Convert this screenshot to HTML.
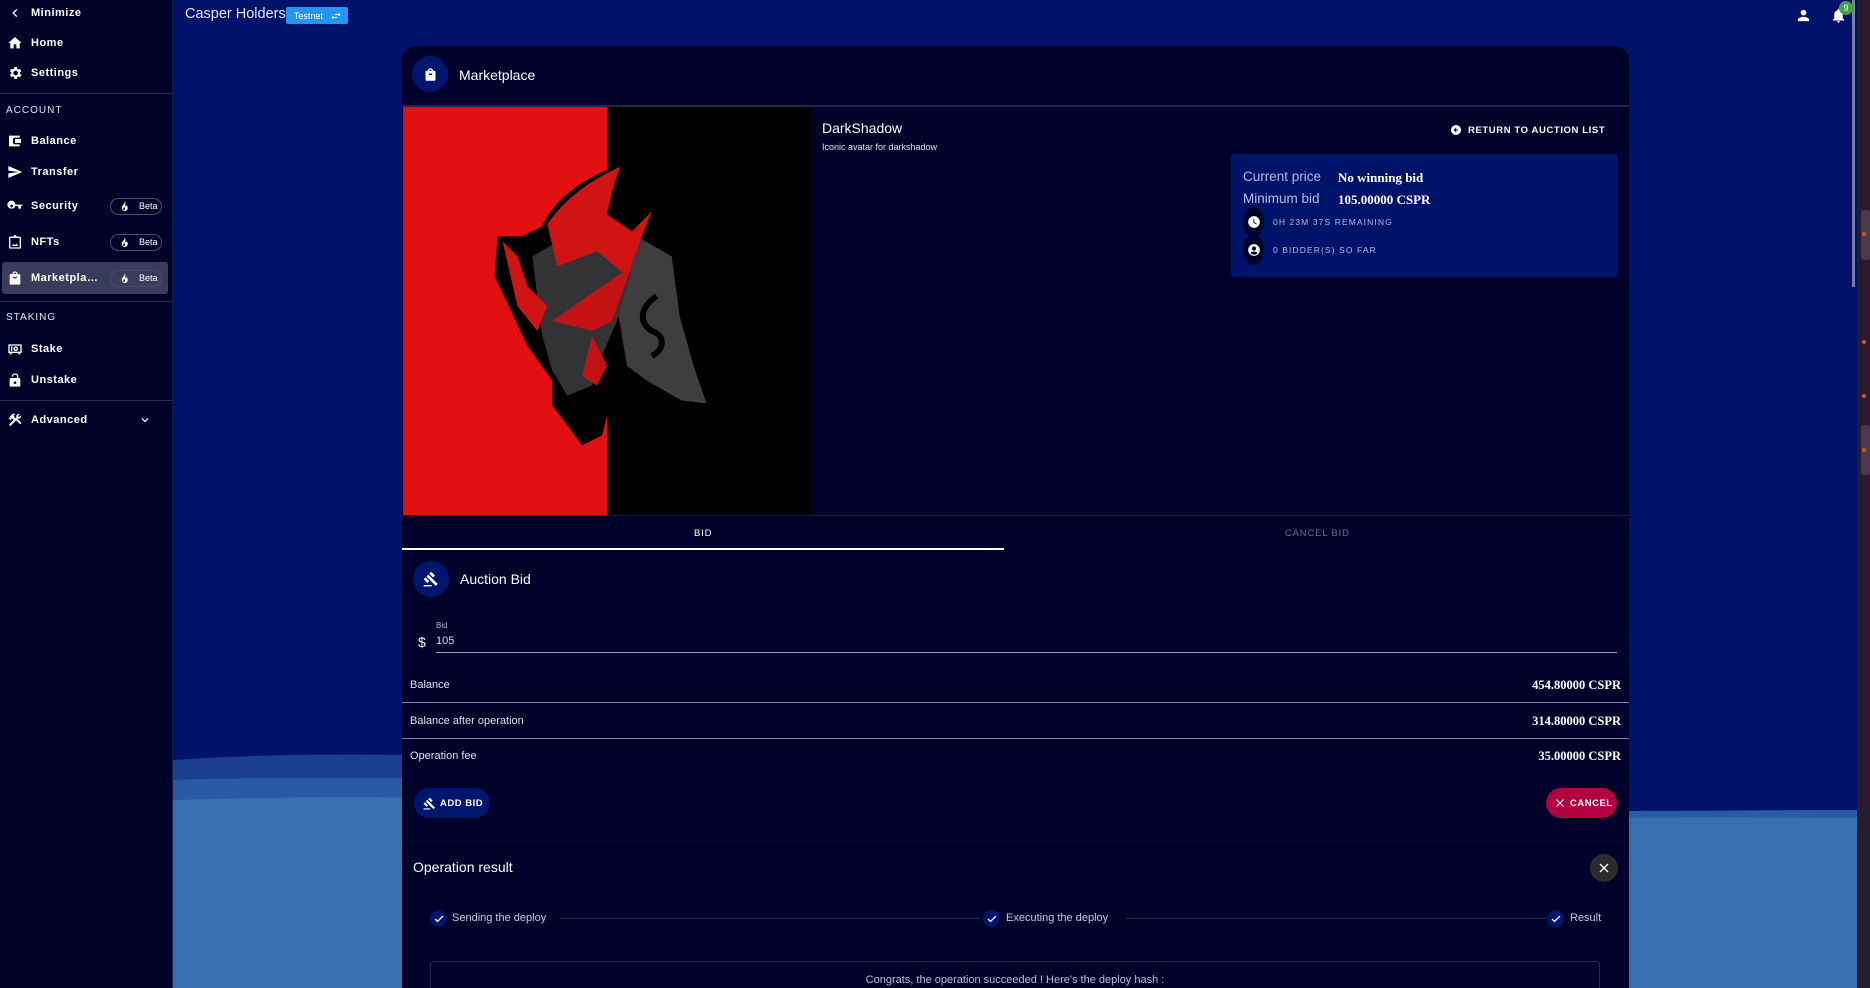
<!DOCTYPE html>
<html><head><meta charset="utf-8">
<style>
*{box-sizing:border-box;margin:0;padding:0}
html,body{width:1870px;height:988px;overflow:hidden}
body{background:#00126a;font-family:"Liberation Sans",sans-serif;color:#fff;position:relative}
.abs{position:absolute}
#side{left:0;top:0;width:173px;height:988px;background:#000328;border-right:1px solid #1a1c44}
.it{position:absolute;left:0;width:173px;height:26px;display:flex;align-items:center;font-size:11px;font-weight:bold;letter-spacing:.5px}
.it svg{position:absolute;left:7px;width:16px;height:16px;fill:#fff}
.it span{position:absolute;left:31px}
.sec{position:absolute;left:6px;font-size:10px;letter-spacing:1px;color:#e6e6ee}
.hr{position:absolute;left:0;width:173px;height:1px;background:#262a4e}
.beta{position:absolute;left:110px;width:52px;height:17px;border:1px solid #4a4c6e;border-radius:9px;font-size:9px;font-weight:normal;letter-spacing:0;display:flex;align-items:center}
.beta svg{position:static;width:12px;height:12px;margin-left:7px;margin-right:9px}
#card{left:402px;top:46px;width:1227px;height:942px;background:#000229;border-radius:14px 14px 0 0;overflow:hidden}
.circ{position:absolute;border-radius:50%;background:#00166e;display:flex;align-items:center;justify-content:center}
.row{position:absolute;left:8px;width:1211px;font-size:11px;color:#e0e0ea}
.row b{position:absolute;right:0;top:-1px;font-family:"Liberation Serif",serif;font-size:12.5px;color:#fff}
.line{position:absolute;left:0;width:1227px;height:1px;background:#7d7f9c}
</style></head><body>
<svg class="abs" style="left:173px;top:740px" width="1697" height="248" viewBox="0 0 1697 248">
<path d="M0 20 C300 0 600 40 900 60 C1200 80 1450 95 1697 105 L1697 248 L0 248Z" fill="#1b3f8f"/>
<path d="M0 40 C300 30 600 55 900 70 C1200 75 1450 70 1697 70 L1697 248 L0 248Z" fill="#2a5aa3"/>
<path d="M0 60 C300 50 600 70 900 78 C1200 80 1450 76 1697 78 L1697 248 L0 248Z" fill="#3570b0"/>
</svg>
<div class="abs" style="left:1857px;top:0;width:13px;height:988px;background:#2a1b2b"></div>
<div class="abs" style="left:1852px;top:0;width:3px;height:287px;background:#7a7e9a"></div>
<div class="abs" style="left:1861px;top:210px;width:9px;height:50px;background:#4a3a4a;border-radius:3px"></div>
<div class="abs" style="left:1861px;top:425px;width:9px;height:50px;background:#4a3a4a;border-radius:3px"></div>
<div class="abs" style="left:1862px;top:232px;width:4px;height:4px;background:#e05020;border-radius:50%"></div>
<div class="abs" style="left:1862px;top:340px;width:4px;height:4px;background:#e05020;border-radius:50%"></div>
<div class="abs" style="left:1862px;top:394px;width:4px;height:4px;background:#e05020;border-radius:50%"></div>
<div class="abs" style="left:1862px;top:448px;width:4px;height:4px;background:#e05020;border-radius:50%"></div>

<div id="side" class="abs">
<div class="it" style="top:0"><svg viewBox="0 0 24 24"><path d="M15.4 7.4L14 6l-6 6 6 6 1.4-1.4L10.8 12z"/></svg><span>Minimize</span></div>
<div class="it" style="top:30px"><svg viewBox="0 0 24 24"><path d="M10 20v-6h4v6h5v-8h3L12 3 2 12h3v8z"/></svg><span>Home</span></div>
<div class="it" style="top:60px"><svg viewBox="0 0 24 24"><path d="M19.4 13a7.5 7.5 0 000-2l2.1-1.6-2-3.5-2.5 1a7 7 0 00-1.7-1L15 3h-4l-.4 2.7a7 7 0 00-1.7 1l-2.5-1-2 3.5L6.6 11a7.5 7.5 0 000 2l-2.1 1.6 2 3.5 2.5-1a7 7 0 001.7 1L11 21h4l.4-2.7a7 7 0 001.7-1l2.5 1 2-3.5zM13 15.5a3.5 3.5 0 110-7 3.5 3.5 0 010 7z"/></svg><span>Settings</span></div>
<div class="hr" style="top:93px"></div>
<div class="sec" style="top:105px">ACCOUNT</div>
<div class="it" style="top:128px"><svg viewBox="0 0 24 24"><path d="M3 4h16v3h-7a3 3 0 00-3 3v4a3 3 0 003 3h7v3H3zM12 9h9v6h-9zM15 11h2v2h-2z"/></svg><span>Balance</span></div>
<div class="it" style="top:159px"><svg viewBox="0 0 24 24"><path d="M2 21l21-9L2 3v7l15 2-15 2z"/></svg><span>Transfer</span></div>
<div class="it" style="top:193px"><svg viewBox="0 0 24 24"><path d="M12.6 10A6 6 0 107 16a6 6 0 005.6-4H17v4h4v-4h2v-2zM7 14a2 2 0 110-4 2 2 0 010 4z"/></svg><span>Security</span><div class="beta"><svg viewBox="0 0 24 24"><path d="M13.5 1s1 3-1 6-5 5-5 9a6 6 0 0012 0c0-4-3-6-3-6s0 3-2 3c0-4 1-8-1-12zM12 20a2 2 0 01-2-2c0-2 2-3 2-5 1 2 2 3 2 5a2 2 0 01-2 2z"/></svg>Beta</div></div>
<div class="it" style="top:229px"><svg viewBox="0 0 24 24"><path d="M19 4h-4l-3-3-3 3H5a2 2 0 00-2 2v14a2 2 0 002 2h14a2 2 0 002-2V6a2 2 0 00-2-2zm0 16H5V6h14zM7 18h10l-3-4-2 3-2-2z"/></svg><span>NFTs</span><div class="beta"><svg viewBox="0 0 24 24"><path d="M13.5 1s1 3-1 6-5 5-5 9a6 6 0 0012 0c0-4-3-6-3-6s0 3-2 3c0-4 1-8-1-12zM12 20a2 2 0 01-2-2c0-2 2-3 2-5 1 2 2 3 2 5a2 2 0 01-2 2z"/></svg>Beta</div></div>
<div class="abs" style="left:2px;top:262px;width:166px;height:32px;background:#3a3c5c;border-radius:3px"></div>
<div class="it" style="top:265px"><svg viewBox="0 0 24 24"><path d="M18 6h-2a4 4 0 00-8 0H6a2 2 0 00-2 2v12a2 2 0 002 2h12a2 2 0 002-2V8a2 2 0 00-2-2zm-6-2a2 2 0 012 2h-4a2 2 0 012-2zm0 9a3 3 0 01-3-3h2a1 1 0 002 0h2a3 3 0 01-3 3z"/></svg><span>Marketpla…</span><div class="beta"><svg viewBox="0 0 24 24"><path d="M13.5 1s1 3-1 6-5 5-5 9a6 6 0 0012 0c0-4-3-6-3-6s0 3-2 3c0-4 1-8-1-12zM12 20a2 2 0 01-2-2c0-2 2-3 2-5 1 2 2 3 2 5a2 2 0 01-2 2z"/></svg>Beta</div></div>
<div class="hr" style="top:301px"></div>
<div class="sec" style="top:312px">STAKING</div>
<div class="it" style="top:336px"><svg viewBox="0 0 24 24"><path d="M2 5h20v13h-2v2h-3v-2H7v2H4v-2H2zm2 2v9h16V7zm2 1h2v7H6zm7 0a3.5 3.5 0 110 7 3.5 3.5 0 010-7zm0 2a1.5 1.5 0 100 3 1.5 1.5 0 000-3z"/></svg><span>Stake</span></div>
<div class="it" style="top:367px"><svg viewBox="0 0 24 24"><path d="M18 9h-1V7a5 5 0 00-10 0h2a3 3 0 016 0v2H6a2 2 0 00-2 2v9a2 2 0 002 2h12a2 2 0 002-2v-9a2 2 0 00-2-2zm-6 9a2 2 0 110-4 2 2 0 010 4z"/></svg><span>Unstake</span></div>
<div class="hr" style="top:400px"></div>
<div class="it" style="top:407px"><svg viewBox="0 0 24 24"><path d="M13.8 12.5l2-2 6 6-2 2zM17.5 10c1.9 0 3.5-1.6 3.5-3.5 0-.6-.2-1.1-.4-1.6L18 7.6 16.4 6l2.7-2.7c-.5-.2-1-.4-1.6-.4C15.6 3 14 4.6 14 6.5c0 .4 0 .8.2 1.1L12.4 9.4 10.6 7.6l.7-.7-1.4-1.4L12 3.4C10.8 2.2 9 2.2 7.8 3.4L4.3 7l1.4 1.4H2.9l-.7.7 3.5 3.5.7-.7V9.1l1.4 1.4.7-.7 1.8 1.8-7.4 7.4 2.1 2.1L16.4 9.8c.3.1.7.2 1.1.2z"/></svg><span>Advanced</span><svg viewBox="0 0 24 24" style="left:138px;width:14px"><path d="M7.4 8.6L12 13.2l4.6-4.6L18 10l-6 6-6-6z"/></svg></div>
</div>

<div class="abs" style="left:185px;top:6px;font-size:14.5px;color:#e4e6f2">Casper Holders</div>
<div class="abs" style="left:286px;top:7px;width:62px;height:17px;background:#2196f3;border-radius:2px;font-size:9px;display:flex;align-items:center;padding-left:8px">Testnet<svg width="14" height="12" viewBox="0 0 24 24" style="margin-left:6px;fill:#fff"><path d="M6.99 11L3 15l3.99 4v-3H14v-2H6.99zM21 9l-3.99-4v3H10v2h7.01v3z"/></svg></div>
<svg class="abs" style="left:1795px;top:7px" width="17" height="17" viewBox="0 0 24 24" fill="#fff"><path d="M12 12a4 4 0 100-8 4 4 0 000 8zm0 2c-2.7 0-8 1.3-8 4v2h16v-2c0-2.7-5.3-4-8-4z"/></svg>
<svg class="abs" style="left:1830px;top:7px" width="17" height="17" viewBox="0 0 24 24" fill="#fff"><path d="M12 22a2 2 0 002-2h-4a2 2 0 002 2zm6-6v-5c0-3.1-1.6-5.6-4.5-6.3V4a1.5 1.5 0 00-3 0v.7C7.6 5.4 6 7.9 6 11v5l-2 2v1h16v-1z"/></svg>
<div class="abs" style="left:1839px;top:1px;width:14px;height:14px;border-radius:50%;background:#43a047;font-size:9px;text-align:center;line-height:14px">9</div>

<div id="card" class="abs">
<div class="circ" style="left:10px;top:10px;width:36px;height:36px"><svg width="15" height="15" viewBox="0 0 24 24" fill="#fff"><path d="M18 6h-2a4 4 0 00-8 0H6a2 2 0 00-2 2v12a2 2 0 002 2h12a2 2 0 002-2V8a2 2 0 00-2-2zm-6-2a2 2 0 012 2h-4a2 2 0 012-2zm0 9a3 3 0 01-3-3h2a1 1 0 002 0h2a3 3 0 01-3 3z"/></svg></div>
<div class="abs" style="left:57px;top:21px;font-size:14px">Marketplace</div>
<div class="abs" style="left:0;top:59px;width:1227px;height:2px;background:#22244a"></div>

<svg class="abs" style="left:0;top:61px" width="410" height="408" viewBox="0 0 410 410">
<rect width="205" height="410" fill="#e21010"/><rect x="205" width="205" height="410" fill="#000"/>
<path d="M222 57 C180 70 150 95 140 120 L120 130 L95 130 L92 170 L125 240 L150 275 L150 300 L180 340 L200 330 L205 310 L230 290 L250 280 L280 300 L300 305 L310 300 L295 250 L280 210 L275 160 L255 130 L250 100 L240 105 L230 125 L200 110 L225 80Z" fill="#000"/>
<path d="M235 130 L270 150 L278 210 L292 260 L305 298 L280 295 L245 275 L225 260 L215 200 L225 160Z" fill="#3e3e40"/>
<path d="M130 150 L165 130 L200 140 L230 165 L215 215 L200 250 L190 280 L165 290 L150 265 L140 230 L135 190Z" fill="#333335"/>
<path d="M218 60 C185 75 160 95 145 118 L155 160 L195 145 L225 170 L240 130 L250 105 L230 125 L205 108 L210 85Z" fill="#d01414"/>
<path d="M100 135 L115 200 L135 225 L145 200 L125 180 L115 150Z" fill="#d01414"/>
<path d="M150 215 L200 180 L230 160 L210 215 L190 225 L170 220Z" fill="#c41212"/>
<path d="M190 230 L205 260 L195 280 L180 270Z" fill="#c41212"/>
<path d="M255 190 C240 200 235 215 250 225 C265 230 262 245 250 250" stroke="#000" stroke-width="6" fill="none"/>
</svg>

<div class="abs" style="left:420px;top:74px;font-size:14px">DarkShadow</div>
<div class="abs" style="left:420px;top:96px;font-size:9px;color:#e0e0ea">Iconic avatar for darkshadow</div>
<svg class="abs" style="left:1048px;top:78px" width="12" height="12" viewBox="0 0 24 24" fill="#fff"><path d="M12 2a10 10 0 100 20 10 10 0 000-20zm4 11h-5l2 2-1.4 1.4L7.2 12l4.4-4.4L13 9l-2 2h5z"/></svg>
<div class="abs" style="left:1066px;top:79px;font-size:9.5px;font-weight:bold;letter-spacing:.6px">RETURN TO AUCTION LIST</div>

<div class="abs" style="left:829px;top:108px;width:387px;height:123px;background:#00136b;border-radius:3px">
<div class="abs" style="left:12px;top:15px;font-size:13.5px;color:#b8bcdc">Current price</div>
<div class="abs" style="left:107px;top:16px;font-size:13px;font-family:'Liberation Serif',serif;font-weight:bold">No winning bid</div>
<div class="abs" style="left:12px;top:37px;font-size:13.5px;color:#b8bcdc">Minimum bid</div>
<div class="abs" style="left:107px;top:38px;font-size:13px;font-family:'Liberation Serif',serif;font-weight:bold">105.00000 CSPR</div>
<div class="abs" style="left:12px;top:53px;width:21px;height:30px;border-radius:50%;background:#000229;display:flex;align-items:center;justify-content:center"><svg width="14" height="14" viewBox="0 0 24 24" fill="#fff"><path d="M12 2a10 10 0 100 20 10 10 0 000-20zm4.2 14.2L11 13V7h1.5v5.2l4.5 2.7z"/></svg></div>
<div class="abs" style="left:42px;top:63px;font-size:8.5px;letter-spacing:1.1px;color:#b8bcdc">0H 23M 37S REMAINING</div>
<div class="abs" style="left:12px;top:81px;width:21px;height:30px;border-radius:50%;background:#000229;display:flex;align-items:center;justify-content:center"><svg width="14" height="14" viewBox="0 0 24 24" fill="#fff"><path d="M12 2a10 10 0 100 20 10 10 0 000-20zm0 4a3.5 3.5 0 110 7 3.5 3.5 0 010-7zm0 14a8 8 0 01-6-2.8c.9-1.8 3.6-2.7 6-2.7s5.1.9 6 2.7a8 8 0 01-6 2.8z"/></svg></div>
<div class="abs" style="left:42px;top:91px;font-size:8.5px;letter-spacing:1.1px;color:#b8bcdc">0 BIDDER(S) SO FAR</div>
</div>

<div class="abs" style="left:0;top:469px;width:1227px;height:1px;background:#1c1e40"></div>
<div class="abs" style="left:292px;top:482px;font-size:9.5px;letter-spacing:.8px">BID</div>
<div class="abs" style="left:0;top:502px;width:602px;height:2px;background:#fff"></div>
<div class="abs" style="left:883px;top:482px;font-size:9.5px;letter-spacing:.8px;color:#6a6c86">CANCEL BID</div>

<div class="circ" style="left:11px;top:515px;width:36px;height:36px"><svg width="16" height="16" viewBox="0 0 24 24" fill="#fff"><path d="M1 21h12v2H1zM5.2 8.2l2.8-2.8 14.1 14.1-2.8 2.8zM12.3 1.1l5.6 5.6-2.8 2.8-5.6-5.6zM3.8 9.6l5.6 5.6-2.8 2.8L1 12.4z"/></svg></div>
<div class="abs" style="left:58px;top:525px;font-size:14px">Auction Bid</div>

<div class="abs" style="left:34px;top:575px;font-size:8px;color:#b0b4d0">Bid</div>
<div class="abs" style="left:16px;top:588px;font-size:14px">$</div>
<div class="abs" style="left:34px;top:589px;font-size:11px;color:#cfd8ff">105</div>
<div class="abs" style="left:34px;top:606px;width:1181px;height:1px;background:#9a9cb4"></div>

<div class="row" style="top:633px">Balance<b>454.80000 CSPR</b></div>
<div class="line" style="top:656px"></div>
<div class="row" style="top:669px">Balance after operation<b>314.80000 CSPR</b></div>
<div class="line" style="top:692px"></div>
<div class="row" style="top:704px">Operation fee<b>35.00000 CSPR</b></div>

<div class="abs" style="left:12px;top:742px;width:76px;height:30px;background:#00166e;border-radius:15px;display:flex;align-items:center;font-size:9.5px;font-weight:bold;letter-spacing:.5px"><svg width="13" height="13" viewBox="0 0 24 24" fill="#fff" style="margin:0 4px 0 9px"><path d="M1 21h12v2H1zM5.2 8.2l2.8-2.8 14.1 14.1-2.8 2.8zM12.3 1.1l5.6 5.6-2.8 2.8-5.6-5.6zM3.8 9.6l5.6 5.6-2.8 2.8L1 12.4z"/></svg>ADD BID</div>
<div class="abs" style="left:1144px;top:742px;width:71px;height:30px;background:#b3003f;border-radius:15px;display:flex;align-items:center;font-size:9.5px;font-weight:bold;letter-spacing:.5px"><svg width="12" height="12" viewBox="0 0 24 24" style="margin:0 4px 0 8px"><path d="M5 5L19 19M19 5L5 19" stroke="#fff" stroke-width="2.2"/></svg>CANCEL</div>

<div class="abs" style="left:0;top:795px;width:1227px;height:1px;background:#060938"></div>
<div class="abs" style="left:11px;top:813px;font-size:14px">Operation result</div>
<div class="abs" style="left:1188px;top:808px;width:28px;height:28px;border-radius:50%;background:#2b2b2e;display:flex;align-items:center;justify-content:center"><svg width="12" height="12" viewBox="0 0 24 24"><path d="M4 4L20 20M20 4L4 20" stroke="#fff" stroke-width="2.5"/></svg></div>

<div class="abs" style="left:28px;top:864px;width:17px;height:17px;border-radius:50%;background:#00166e;display:flex;align-items:center;justify-content:center"><svg width="12" height="12" viewBox="0 0 24 24"><path d="M4 12l5 5L20 6" stroke="#fff" stroke-width="2.6" fill="none"/></svg></div>
<div class="abs" style="left:50px;top:866px;font-size:11px;color:#c8cae0">Sending the deploy</div>
<div class="abs" style="left:158px;top:872px;width:420px;height:1px;background:#2a2c50"></div>
<div class="abs" style="left:581px;top:864px;width:17px;height:17px;border-radius:50%;background:#00166e;display:flex;align-items:center;justify-content:center"><svg width="12" height="12" viewBox="0 0 24 24"><path d="M4 12l5 5L20 6" stroke="#fff" stroke-width="2.6" fill="none"/></svg></div>
<div class="abs" style="left:604px;top:866px;font-size:11px;color:#c8cae0">Executing the deploy</div>
<div class="abs" style="left:724px;top:872px;width:420px;height:1px;background:#2a2c50"></div>
<div class="abs" style="left:1145px;top:864px;width:17px;height:17px;border-radius:50%;background:#00166e;display:flex;align-items:center;justify-content:center"><svg width="12" height="12" viewBox="0 0 24 24"><path d="M4 12l5 5L20 6" stroke="#fff" stroke-width="2.6" fill="none"/></svg></div>
<div class="abs" style="left:1168px;top:866px;font-size:11px;color:#c8cae0">Result</div>

<div class="abs" style="left:28px;top:915px;width:1170px;height:27px;border:1px solid #2a2c50;border-bottom:none;border-radius:4px 4px 0 0"></div>
<div class="abs" style="left:28px;top:928px;width:1170px;text-align:center;font-size:11px;line-height:13px;color:#b8bcdc">Congrats, the operation succeeded ! Here's the deploy hash :</div>
</div>
</body></html>
